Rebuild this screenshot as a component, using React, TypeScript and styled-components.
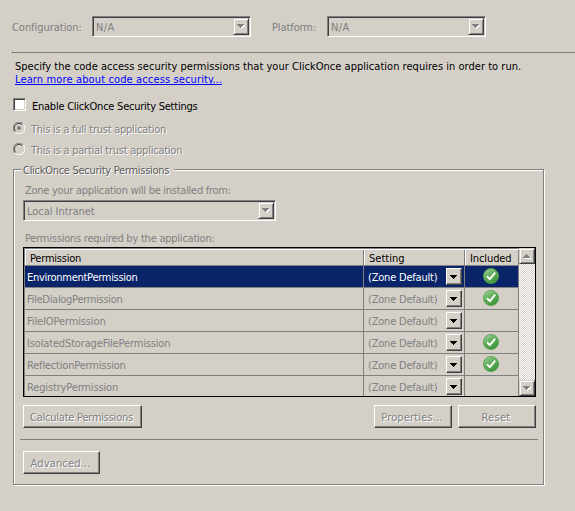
import React from "react";
import styled, { createGlobalStyle, css } from "styled-components";

const face = "#d4d0c8";
const shade = "#808080";
const dark = "#404040";
const navy = "#0a246a";

const GlobalStyle = createGlobalStyle`
  * { box-sizing: border-box; }
  body {
    margin: 0;
    background: ${face};
    font: 11px/13px "DejaVu Sans Condensed", "DejaVu Sans", sans-serif;
    font-stretch: condensed;
    color: #000;
  }
`;

const Page = styled.main`
  display: flex;
  flex-direction: column;
  width: 575px;
  height: 511px;
  overflow: hidden;
  background: ${face};
`;

type Tone = "normal" | "disabled" | "embossed" | "legend" | "selected";
const tones = {
  normal: css`color: #000;`,
  disabled: css`color: ${shade};`,
  embossed: css`color: ${shade}; text-shadow: 1px 1px 0 #fff;`,
  legend: css`color: #5c5c5c; text-shadow: 1px 1px 0 #fff;`,
  selected: css`color: #fff;`,
};

const Label = styled.span<{ $tone?: Tone; $track?: number }>`
  display: block;
  white-space: nowrap;
  letter-spacing: ${(p) => p.$track ?? 0}px;
  ${(p) => tones[p.$tone ?? "normal"]}
`;

const ConfigBar = styled.header`
  display: flex;
  align-items: flex-start;
  height: 52px;
  padding: 16px 0 0 12px;
`;

const ConfigLabel = styled(Label)<{ $width: number; $lead?: number }>`
  width: ${(p) => p.$width}px;
  margin-top: 5px;
  padding-left: ${(p) => p.$lead ?? 0}px;
`;

const HeaderRule = styled.hr`
  flex: none;
  width: 564px;
  height: 1px;
  margin: 0 0 0 11px;
  border: 0;
  background: ${shade};
  box-shadow: -1px 0 0 #fff;
`;

const ComboBox = styled.div<{ $width: number }>`
  display: flex;
  flex: none;
  justify-content: space-between;
  width: ${(p) => p.$width}px;
  height: 21px;
  padding: 1px 1px 0 3px;
  border: 1px solid;
  border-color: ${shade} #fff #fff ${shade};
  box-shadow: inset 1px 1px 0 ${dark};
`;

const ComboText = styled(Label)`
  margin-top: 3px;
`;

const ComboButton = styled.span`
  display: flex;
  width: 16px;
  height: 17px;
  padding: 5px 0 0 3px;
  background: ${face};
  border: 1px solid;
  border-color: ${face} ${dark} ${dark} ${face};
  box-shadow: inset 1px 1px 0 #fff, inset -1px -1px 0 ${shade};
`;

const Glyph = styled.svg`
  display: block;
  flex: none;
  shape-rendering: crispEdges;
`;

const Intro = styled.section`
  padding: 7px 0 0 15px;
  height: 45px;
`;

const HelpLink = styled.a`
  display: block;
  width: 207px;
  height: 12px;
  border-bottom: 1px solid #00f;
  color: #00f;
  text-decoration: none;
  white-space: nowrap;
  letter-spacing: 0.13px;
`;

const Options = styled.section`
  display: flex;
  flex-direction: column;
  height: 66px;
  padding-left: 13px;
`;

const OptionRow = styled.label<{ $height: number }>`
  display: flex;
  align-items: flex-start;
  gap: 6px;
  height: ${(p) => p.$height}px;
`;

const OptionText = styled(Label)<{ $drop: number }>`
  margin-top: ${(p) => p.$drop}px;
`;

const CheckBox = styled.span`
  width: 13px;
  height: 13px;
  background: #fff;
  border: 1px solid;
  border-color: ${shade} #fff #fff ${shade};
  box-shadow: inset 1px 1px 0 ${dark}, inset -1px -1px 0 ${face};
`;

const Group = styled.fieldset`
  display: flex;
  flex-direction: column;
  flex: none;
  width: 531px;
  height: 316px;
  margin: 5px 0 0 13px;
  padding: 0;
  min-width: 0;
  border: 1px solid ${shade};
  box-shadow: 1px 1px 0 #fff, inset 1px 1px 0 #fff;
`;

/* The caption sits on the top edge of the group and interrupts it. */
const Caption = styled.div`
  width: 152px;
  height: 13px;
  margin: -6px 0 0 8px;
  padding-left: 1px;
  background: ${face};
`;

const GroupBody = styled.div`
  display: flex;
  flex-direction: column;
  padding: 7px 8px 0 9px;
`;

const FieldLabel = styled(Label)<{ $above?: number; $below?: number }>`
  margin: ${(p) => p.$above ?? 0}px 0 ${(p) => p.$below ?? 0}px 2px;
`;

const GridFrame = styled.div`
  display: flex;
  width: 513px;
  height: 150px;
  margin-top: 2px;
  border: 1px solid #000;
`;

const Grid = styled.div`
  flex: none;
  width: 495px;
  height: 148px;
  overflow: hidden;
  border-left: 1px solid ${shade};
  border-top: 1px solid ${shade};
`;

const columns = "339px 101px 54px";

const HeaderRow = styled.div`
  display: grid;
  grid-template-columns: ${columns};
  height: 17px;
  border-bottom: 1px solid ${shade};
`;

const HeaderCell = styled.div`
  padding: 2px 0 0 5px;
  height: 16px;
  border-top: 1px solid #fff;
  box-shadow: inset 1px 0 0 #fff, inset -1px 0 0 ${shade};
`;

const Row = styled.div<{ $selected: boolean }>`
  display: grid;
  grid-template-columns: ${columns};
  height: 22px;
  background: ${(p) => (p.$selected ? navy : face)};
`;

const Cell = styled.div<{ $inset: number }>`
  display: flex;
  align-items: flex-start;
  justify-content: space-between;
  height: 22px;
  padding: 2px 2px 0 ${(p) => p.$inset}px;
  border-right: 1px solid ${shade};
  border-bottom: 1px solid ${shade};
`;

const IconCell = styled(Cell)`
  padding-right: 0;
`;

const CellText = styled(Label)`
  margin-top: 3px;
`;

const DropButton = styled.span`
  display: flex;
  width: 16px;
  height: 17px;
  padding: 6px 0 0 3px;
  background: ${face};
  border: 1px solid;
  border-color: #fff ${dark} ${dark} #fff;
  box-shadow: inset -1px -1px 0 ${shade};
`;

const ScrollBar = styled.div`
  display: flex;
  flex-direction: column;
  justify-content: space-between;
  width: 16px;
  height: 148px;
  background: repeating-conic-gradient(#fff 0 25%, ${face} 0 50%) 0 0 / 2px 2px;
`;

const ScrollButton = styled.span`
  display: flex;
  width: 16px;
  height: 16px;
  padding: 5px 0 0 3px;
  background: ${face};
  border: 1px solid;
  border-color: ${face} ${dark} ${dark} ${face};
  box-shadow: inset 1px 1px 0 #fff, inset -1px -1px 0 ${shade};
`;

const ButtonRow = styled.div`
  display: flex;
  height: 34px;
  padding-top: 8px;
`;

const Button = styled.button<{ $width: number; $push?: number }>`
  display: flex;
  justify-content: center;
  align-items: flex-start;
  flex: none;
  width: ${(p) => p.$width}px;
  height: 23px;
  margin: 0 0 0 ${(p) => p.$push ?? 0}px;
  padding: 5px 2px 0 0;
  font: inherit;
  background: ${face};
  border: 1px solid;
  border-color: #fff ${dark} ${dark} #fff;
  box-shadow: inset -1px -1px 0 ${shade};
`;

const GroupRule = styled.hr`
  width: 518px;
  height: 1px;
  margin: 8px 0 11px -3px;
  border: 0;
  background: ${shade};
`;

function EmbossedArrow({ up = false }: { up?: boolean }) {
  const shape = up ? "M3 0h1v1h1v1h1v1h1v1H0V3h1V2h1V1h1z" : "M0 0h7v1H6v1H5v1H4v1H3V3H2V2H1V1H0z";
  return (
    <Glyph width="8" height="5">
      <path d={shape} transform="translate(1 1)" fill="#fff" />
      <path d={shape} fill={shade} />
    </Glyph>
  );
}

function Combo({ width, text, track }: { width: number; text: string; track: number }) {
  return (
    <ComboBox $width={width}>
      <ComboText $tone="disabled" $track={track}>{text}</ComboText>
      <ComboButton><EmbossedArrow /></ComboButton>
    </ComboBox>
  );
}

function Radio({ checked = false }: { checked?: boolean }) {
  return (
    <svg width="12" height="12" viewBox="0 0 12 12" fill="none">
      <path d="M1.8 10.2A5.5 5.5 0 0 1 10.2 1.8" stroke={shade} />
      <path d="M10.2 1.8A5.5 5.5 0 0 1 1.8 10.2" stroke="#fff" />
      <path d="M2.7 9.3A4.5 4.5 0 0 1 9.3 2.7" stroke={dark} />
      {checked && <path d="M5 4h2v1h1v2H7v1H5V7H4V5h1z" fill={shade} />}
    </svg>
  );
}

function IncludedIcon() {
  return (
    <svg width="16" height="16" viewBox="0 0 16 16">
      <defs>
        <linearGradient id="included" x1="0.1" y1="0" x2="0.7" y2="1">
          <stop offset="0" stopColor="#a3d3a0" />
          <stop offset="0.45" stopColor="#62b05c" />
          <stop offset="1" stopColor="#3d9637" />
        </linearGradient>
      </defs>
      <circle cx="8" cy="8" r="7.6" fill="url(#included)" stroke="#4f9f4a" strokeWidth="0.8" />
      <path d="M4 8.2 6.9 11 12.2 4.6" fill="none" stroke="#fff" strokeWidth="1.9" />
    </svg>
  );
}

const permissions = [
  { name: "EnvironmentPermission", track: -0.28, included: true },
  { name: "FileDialogPermission", track: -0.29, included: true },
  { name: "FileIOPermission", track: -0.12, included: false },
  { name: "IsolatedStorageFilePermission", track: -0.15, included: true },
  { name: "ReflectionPermission", track: -0.19, included: true },
  { name: "RegistryPermission", track: -0.15, included: false },
];

export default function App() {
  return (
    <Page>
      <GlobalStyle />
      <ConfigBar>
        <ConfigLabel $width={80} $tone="disabled" $track={-0.04}>Configuration:</ConfigLabel>
        <Combo width={159} text="N/A" track={0.4} />
        <ConfigLabel $width={76} $lead={21} $tone="disabled" $track={-0.1}>Platform:</ConfigLabel>
        <Combo width={159} text="N/A" track={0.4} />
      </ConfigBar>
      <HeaderRule />
      <Intro>
        <Label $track={0.025}>
          Specify the code access security permissions that your ClickOnce application requires in order to run.
        </Label>
        <HelpLink>Learn more about code access security...</HelpLink>
      </Intro>
      <Options>
        <OptionRow $height={24}>
          <CheckBox />
          <OptionText $drop={2} $track={-0.24}>Enable ClickOnce Security Settings</OptionText>
        </OptionRow>
        <OptionRow $height={21}>
          <Radio checked />
          <OptionText $drop={1} $tone="embossed" $track={-0.25}>This is a full trust application</OptionText>
        </OptionRow>
        <OptionRow $height={21}>
          <Radio />
          <OptionText $drop={1} $tone="embossed" $track={-0.24}>This is a partial trust application</OptionText>
        </OptionRow>
      </Options>
      <Group>
        <Caption>
          <Label $tone="legend" $track={-0.28}>ClickOnce Security Permissions</Label>
        </Caption>
        <GroupBody>
          <FieldLabel $below={3} $tone="disabled" $track={-0.27}>Zone your application will be installed from:</FieldLabel>
          <Combo width={253} text="Local Intranet" track={-0.04} />
          <FieldLabel $above={11} $tone="disabled" $track={-0.23}>Permissions required by the application:</FieldLabel>
          <GridFrame>
            <Grid>
              <HeaderRow>
                <HeaderCell><Label $track={-0.22}>Permission</Label></HeaderCell>
                <HeaderCell><Label>Setting</Label></HeaderCell>
                <HeaderCell><Label $track={-0.1}>Included</Label></HeaderCell>
              </HeaderRow>
              {permissions.map((p, i) => {
                const tone: Tone = i === 0 ? "selected" : "disabled";
                return (
                  <Row key={p.name} $selected={i === 0}>
                    <Cell $inset={2}><CellText $tone={tone} $track={p.track}>{p.name}</CellText></Cell>
                    <Cell $inset={4}>
                      <CellText $tone={tone} $track={-0.2}>(Zone Default)</CellText>
                      <DropButton>
                        <Glyph width="7" height="4"><path d="M0 0h7v1H6v1H5v1H4v1H3V3H2V2H1V1H0z" /></Glyph>
                      </DropButton>
                    </Cell>
                    <IconCell $inset={18}>{p.included && <IncludedIcon />}</IconCell>
                  </Row>
                );
              })}
            </Grid>
            <ScrollBar>
              <ScrollButton><EmbossedArrow up /></ScrollButton>
              <ScrollButton><EmbossedArrow /></ScrollButton>
            </ScrollBar>
          </GridFrame>
          <ButtonRow>
            <Button $width={119}><Label $tone="embossed" $track={-0.24}>Calculate Permissions</Label></Button>
            <Button $width={78} $push={232}><Label $tone="embossed" $track={0.17}>Properties...</Label></Button>
            <Button $width={78} $push={6}><Label $tone="embossed" $track={0.3}>Reset</Label></Button>
          </ButtonRow>
          <GroupRule />
          <Button $width={77}><Label $tone="embossed" $track={0.15}>Advanced...</Label></Button>
        </GroupBody>
      </Group>
    </Page>
  );
}
